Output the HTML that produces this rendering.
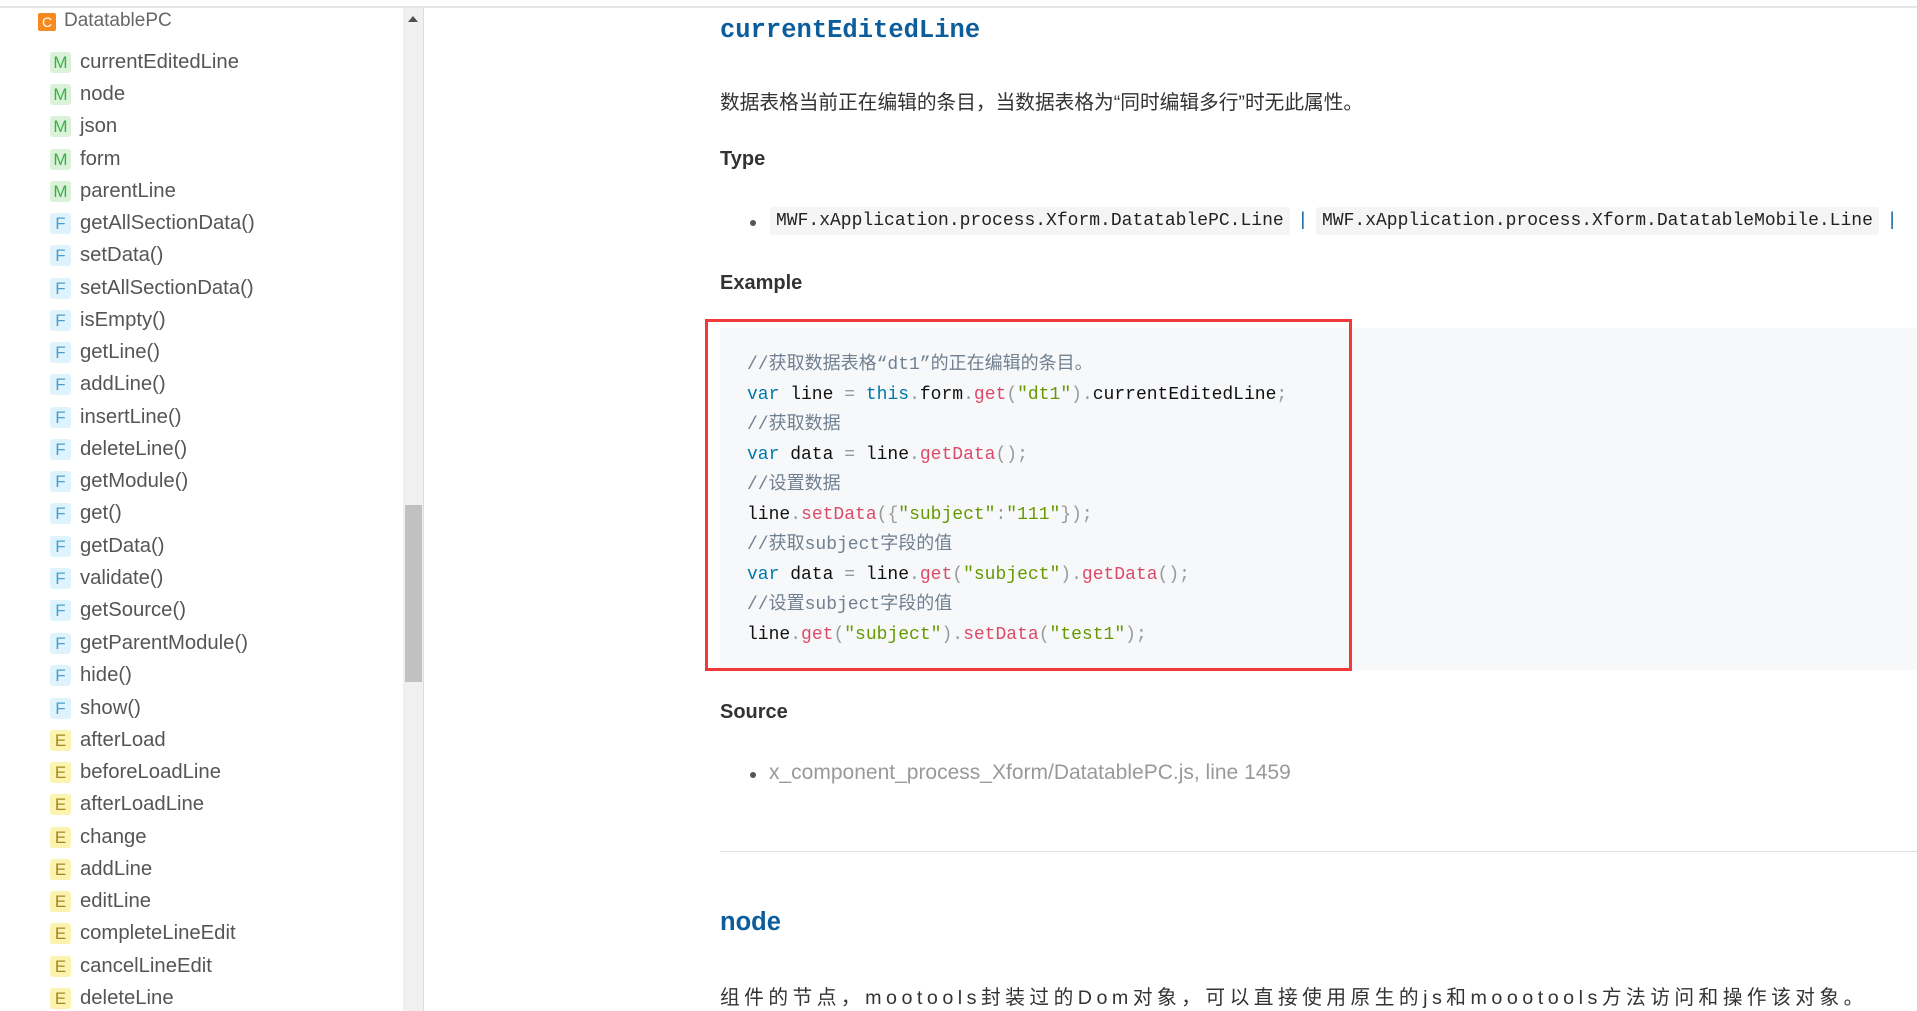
<!DOCTYPE html>
<html><head><meta charset="utf-8">
<style>
*{margin:0;padding:0;box-sizing:border-box}
html,body{width:1917px;height:1011px;overflow:hidden;background:#fff;font-family:"Liberation Sans","Noto Sans CJK SC",sans-serif;color:#333}
.topline{position:absolute;left:0;top:6px;width:1917px;height:2px;background:#e6e6e6}
.cls{position:absolute;left:38px;top:13px;width:18px;height:18px;background:#f68a1e;color:#fff;font-size:14px;line-height:18px;text-align:center;border-radius:2px}
.clsname{position:absolute;left:64px;top:10px;font-size:19px;color:#666}
.it{position:absolute;left:50px;height:21px;font-size:20.3px;color:#555;white-space:nowrap}
.ic{display:inline-block;width:21px;height:21px;border-radius:3px;text-align:center;line-height:21px;font-size:17px;vertical-align:top;margin-right:9px}
.M{background:#d9f2d9;color:#3cb043}
.F{background:#dff3fc;color:#4a9fd0}
.E{background:#fdf3b0;color:#a08a20}
.it span.t{line-height:21px;vertical-align:top}
.sb{position:absolute;left:403px;top:8px;width:21px;height:1003px;background:#f0f0f0;border-right:1px solid #ddd}
.thumb{position:absolute;left:405px;top:505px;width:17px;height:177px;background:#c1c1c1}
.arrow{position:absolute;left:408px;top:16px;width:0;height:0;border-left:5px solid transparent;border-right:5px solid transparent;border-bottom:6px solid #505050}
.abs{position:absolute;white-space:nowrap}
h1.abs{font-family:"Liberation Mono",monospace;font-size:25.5px;color:#0b5d9c;font-weight:bold}
.p{font-size:19.7px;color:#333}
.h4{font-size:20px;font-weight:bold;color:#333}
.mono{font-family:"Liberation Mono",monospace}
.tcode{background:#f5f5f5;padding:4px 6px;border-radius:3px;font-size:18px;color:#222}
.bullet{position:absolute;width:6px;height:6px;border-radius:50%;background:#555}
.codebg{position:absolute;left:720px;top:328px;width:1197px;height:342px;background:#f7f8fa}
.red{position:absolute;left:705px;top:319px;width:647px;height:352px;border:3px solid #f03a3a}
.code{position:absolute;left:747px;top:350px;font-family:"Liberation Mono","Noto Sans CJK SC",monospace;font-size:18px;line-height:30px;color:#111;white-space:pre}
.c{color:#708090}.k{color:#07a}.f{color:#dd4a68}.s{color:#690}.pu{color:#999}
</style></head><body>
<div class="topline"></div>
<div class="cls">C</div><div class="clsname">DatatablePC</div>

<div class="it" style="top:52px"><span class="ic M">M</span><span class="t">currentEditedLine</span></div>
<div class="it" style="top:84px"><span class="ic M">M</span><span class="t">node</span></div>
<div class="it" style="top:116px"><span class="ic M">M</span><span class="t">json</span></div>
<div class="it" style="top:149px"><span class="ic M">M</span><span class="t">form</span></div>
<div class="it" style="top:181px"><span class="ic M">M</span><span class="t">parentLine</span></div>
<div class="it" style="top:213px"><span class="ic F">F</span><span class="t">getAllSectionData()</span></div>
<div class="it" style="top:245px"><span class="ic F">F</span><span class="t">setData()</span></div>
<div class="it" style="top:278px"><span class="ic F">F</span><span class="t">setAllSectionData()</span></div>
<div class="it" style="top:310px"><span class="ic F">F</span><span class="t">isEmpty()</span></div>
<div class="it" style="top:342px"><span class="ic F">F</span><span class="t">getLine()</span></div>
<div class="it" style="top:374px"><span class="ic F">F</span><span class="t">addLine()</span></div>
<div class="it" style="top:407px"><span class="ic F">F</span><span class="t">insertLine()</span></div>
<div class="it" style="top:439px"><span class="ic F">F</span><span class="t">deleteLine()</span></div>
<div class="it" style="top:471px"><span class="ic F">F</span><span class="t">getModule()</span></div>
<div class="it" style="top:503px"><span class="ic F">F</span><span class="t">get()</span></div>
<div class="it" style="top:536px"><span class="ic F">F</span><span class="t">getData()</span></div>
<div class="it" style="top:568px"><span class="ic F">F</span><span class="t">validate()</span></div>
<div class="it" style="top:600px"><span class="ic F">F</span><span class="t">getSource()</span></div>
<div class="it" style="top:633px"><span class="ic F">F</span><span class="t">getParentModule()</span></div>
<div class="it" style="top:665px"><span class="ic F">F</span><span class="t">hide()</span></div>
<div class="it" style="top:698px"><span class="ic F">F</span><span class="t">show()</span></div>
<div class="it" style="top:730px"><span class="ic E">E</span><span class="t">afterLoad</span></div>
<div class="it" style="top:762px"><span class="ic E">E</span><span class="t">beforeLoadLine</span></div>
<div class="it" style="top:794px"><span class="ic E">E</span><span class="t">afterLoadLine</span></div>
<div class="it" style="top:827px"><span class="ic E">E</span><span class="t">change</span></div>
<div class="it" style="top:859px"><span class="ic E">E</span><span class="t">addLine</span></div>
<div class="it" style="top:891px"><span class="ic E">E</span><span class="t">editLine</span></div>
<div class="it" style="top:923px"><span class="ic E">E</span><span class="t">completeLineEdit</span></div>
<div class="it" style="top:956px"><span class="ic E">E</span><span class="t">cancelLineEdit</span></div>
<div class="it" style="top:988px"><span class="ic E">E</span><span class="t">deleteLine</span></div>

<div class="sb"></div><div class="thumb"></div><div class="arrow"></div>

<h1 class="abs" style="left:720px;top:16px">currentEditedLine</h1>
<div class="abs p" style="left:720px;top:86px">数据表格当前正在编辑的条目，当数据表格为“同时编辑多行”时无此属性。</div>
<div class="abs h4" style="left:720px;top:148px">Type</div>
<div class="bullet" style="left:750px;top:220px"></div>
<div class="abs mono" style="left:770px;top:209px;font-size:18px"><span class="tcode">MWF.xApplication.process.Xform.DatatablePC.Line</span> <span style="color:#0b5d9c;font-family:'Liberation Sans'">|</span> <span class="tcode">MWF.xApplication.process.Xform.DatatableMobile.Line</span> <span style="color:#0b5d9c;font-family:'Liberation Sans'">|</span></div>
<div class="abs h4" style="left:720px;top:272px">Example</div>

<div class="codebg"></div>
<div class="red"></div>
<div class="code"><span class="c">//获取数据表格“dt1”的正在编辑的条目。</span>
<span class="k">var</span> line <span class="pu">=</span> <span class="k">this</span><span class="pu">.</span>form<span class="pu">.</span><span class="f">get</span><span class="pu">(</span><span class="s">"dt1"</span><span class="pu">).</span>currentEditedLine<span class="pu">;</span>
<span class="c">//获取数据</span>
<span class="k">var</span> data <span class="pu">=</span> line<span class="pu">.</span><span class="f">getData</span><span class="pu">();</span>
<span class="c">//设置数据</span>
line<span class="pu">.</span><span class="f">setData</span><span class="pu">({</span><span class="s">"subject"</span><span class="pu">:</span><span class="s">"111"</span><span class="pu">});</span>
<span class="c">//获取subject字段的值</span>
<span class="k">var</span> data <span class="pu">=</span> line<span class="pu">.</span><span class="f">get</span><span class="pu">(</span><span class="s">"subject"</span><span class="pu">).</span><span class="f">getData</span><span class="pu">();</span>
<span class="c">//设置subject字段的值</span>
line<span class="pu">.</span><span class="f">get</span><span class="pu">(</span><span class="s">"subject"</span><span class="pu">).</span><span class="f">setData</span><span class="pu">(</span><span class="s">"test1"</span><span class="pu">);</span></div>

<div class="abs h4" style="left:720px;top:701px">Source</div>
<div class="bullet" style="left:750px;top:772px"></div>
<div class="abs" style="left:769px;top:761px;font-size:21px;color:#999">x_component_process_Xform/DatatablePC.js, line 1459</div>
<div style="position:absolute;left:720px;top:851px;width:1197px;height:1px;background:#e0e0e0"></div>
<h1 class="abs" style="left:720px;top:908px;font-family:'Liberation Sans',sans-serif">node</h1>
<div class="abs p" style="left:720px;top:981px;letter-spacing:4.5px">组件的节点，mootools封装过的Dom对象，可以直接使用原生的js和moootools方法访问和操作该对象。</div>
</body></html>
